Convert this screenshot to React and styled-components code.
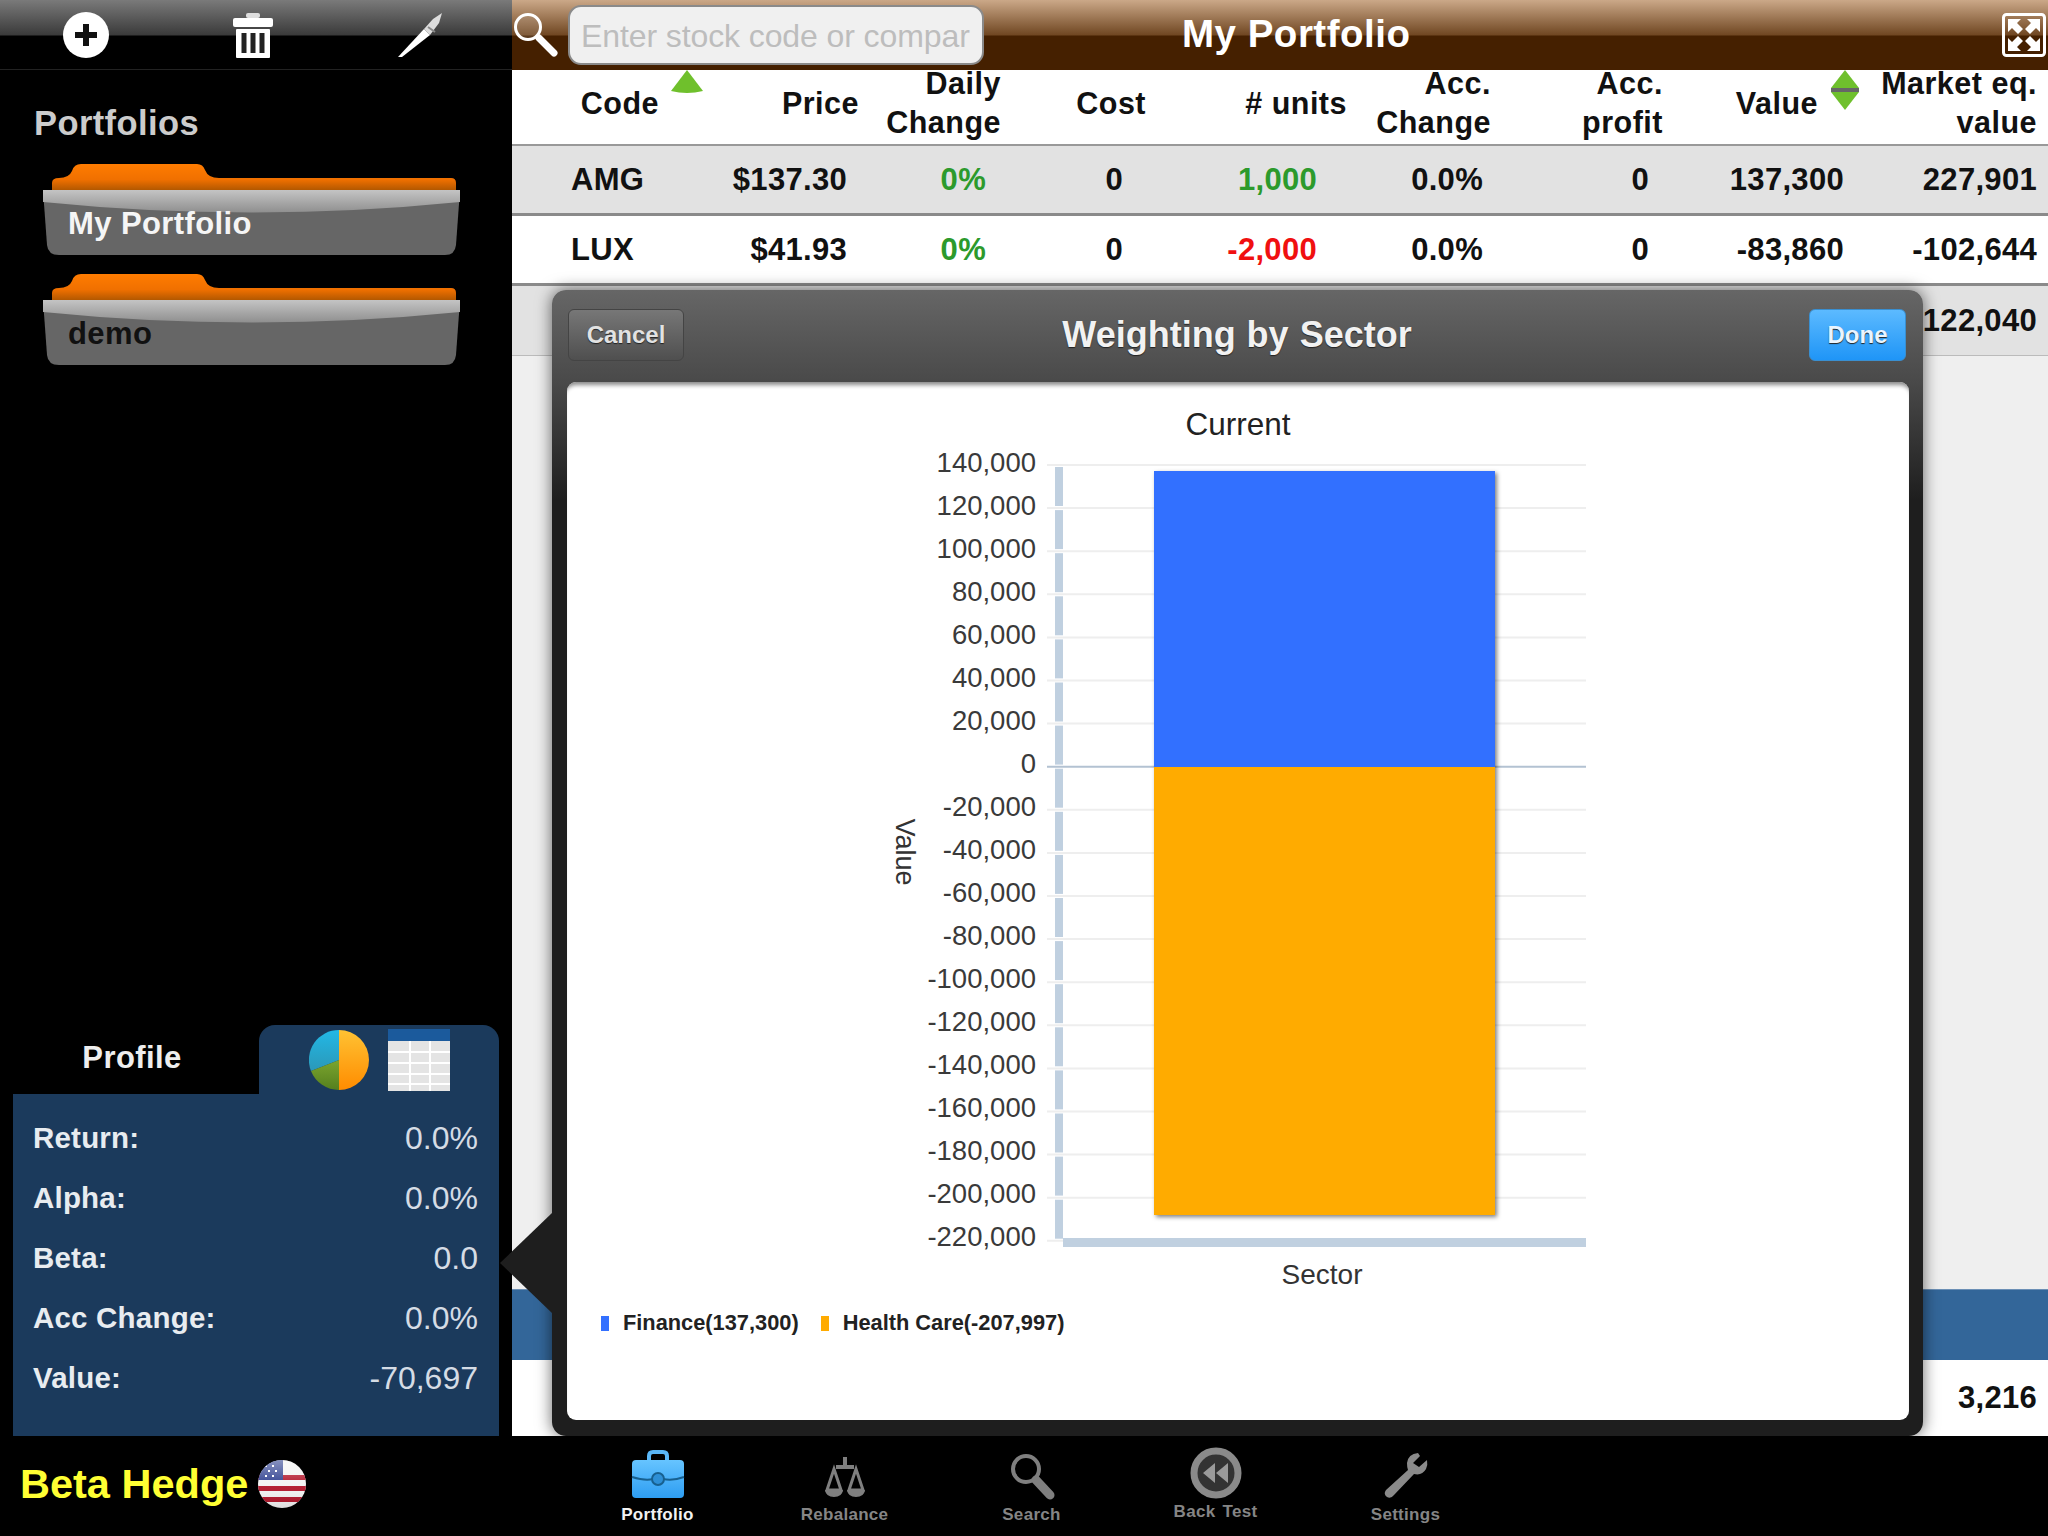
import React from 'react';
import styled, { createGlobalStyle } from 'styled-components';

const GlobalStyle = createGlobalStyle`
  html, body { margin: 0; padding: 0; background: #000; }
  body { font-family: "Liberation Sans", Arial, sans-serif; }
  #root { width: 2048px; height: 1536px; overflow: hidden; }
  * { box-sizing: border-box; }
`;

const Page = styled.div`
  width: 2048px;
  height: 1536px;
  display: flex;
  flex-direction: column;
  background: #000;
`;

const Top = styled.div`
  display: flex;
  height: 1436px;
`;

/* ---------- sidebar ---------- */

const Sidebar = styled.aside`
  width: 512px;
  display: flex;
  flex-direction: column;
  background: #000;
`;

const SideToolbar = styled.div`
  height: 70px;
  display: flex;
  align-items: center;
  padding-left: 63px;
  gap: 124px;
  border-bottom: 1px solid #222;
  background: linear-gradient(#7a7a7a 0, #3a3a3a 35px, #000 36px);
`;

const SideTitle = styled.div`
  margin: 33px 0 20px 34px;
  font-size: 34.5px;
  line-height: 40px;
  font-weight: bold;
  letter-spacing: 0.4px;
  color: #ccc;
`;

const Folder = styled.div`
  position: relative;
  width: 417px;
  height: 92px;
  margin: 0 0 18px 43px;
  padding: 42px 0 0 25px;
  font-size: 31px;
  line-height: 38px;
  font-weight: bold;
  letter-spacing: 0.4px;
  color: ${p => (p.$active ? '#f5f5f5' : '#111')};
  svg { position: absolute; left: 0; top: 0; }
  span { position: relative; }
`;

const ProfilePanel = styled.div`
  margin: auto 0 0 13px;
  width: 486px;
`;

const ProfileHead = styled.div`
  display: flex;
  height: 69px;
`;

const ProfileLabel = styled.div`
  width: 246px;
  padding-right: 8px;
  text-align: center;
  font-size: 31px;
  line-height: 66px;
  font-weight: bold;
  letter-spacing: 0.4px;
  color: #eee;
`;

const ProfileTab = styled.div`
  flex: 1;
  display: flex;
  gap: 19px;
  padding: 4px 0 0 50px;
  background: #1b3a5c;
  border-radius: 16px 16px 0 0;
`;

const ProfileBody = styled.div`
  height: 342px;
  padding: 14px 21px 0 20px;
  background: #1b3a5c;
`;

const StatRow = styled.div`
  display: flex;
  justify-content: space-between;
  height: 60px;
  line-height: 60px;
`;

const StatName = styled.span`
  font-size: 29.5px;
  font-weight: bold;
  letter-spacing: 0.2px;
  color: #e8ecf0;
`;

const StatValue = styled.span`
  font-size: 32px;
  color: #d5dce5;
`;

/* ---------- main ---------- */

const Main = styled.main`
  position: relative;
  flex: 1;
  display: flex;
  flex-direction: column;
  background: #efefef;
`;

const MainHeader = styled.div`
  height: 70px;
  display: flex;
  align-items: center;
  padding: 0 2px 0 1px;
  background: linear-gradient(#cba888 0, #704722 35px, #452000 36px);
`;

const SearchBox = styled.div`
  width: 416px;
  height: 60px;
  margin-left: 9px;
  padding-left: 11px;
  overflow: hidden;
  white-space: nowrap;
  font-size: 32px;
  line-height: 58px;
  letter-spacing: -0.1px;
  color: #bdbdbd;
  background: #f0f0f0;
  border: 2px solid #8a8a8a;
  border-radius: 13px;
`;

const HeaderTitle = styled.div`
  margin: 0 0 3px 198px;
  font-size: 38.5px;
  font-weight: bold;
  letter-spacing: 0.5px;
  color: #fff;
`;

const ExpandButton = styled.div`
  margin-left: auto;
  height: 44px;
`;

const HeadRow = styled.div`
  height: 76px;
  padding-bottom: 8px;
  display: grid;
  grid-template-columns: 147px 200px 142px 145px 201px 144px 172px 155px 219px;
  grid-template-rows: 66px;
  align-items: center;
  background: #fff;
  border-bottom: 2px solid #999;
`;

const HeadCell = styled.div`
  position: relative;
  text-align: right;
  font-size: 30.5px;
  line-height: 39px;
  font-weight: bold;
  letter-spacing: 0.5px;
  color: #111;
`;

const SortMark = styled.svg`
  position: absolute;
  top: ${p => p.$top}px;
  left: ${p => p.$left}px;
`;

const Row = styled.div`
  height: ${p => p.$height || 70}px;
  display: grid;
  grid-template-columns: 189px 146px 139px 137px 194px 166px 166px 195px 193px;
  align-items: center;
  background: ${p => (p.$shade ? '#e2e2e2' : '#fff')};
  border-bottom: 3px solid #8a8a8a;
  ${p => p.$flat && 'border-bottom: 1px solid #bbb;'}
`;

const Cell = styled.div`
  text-align: right;
  font-size: 31px;
  font-weight: bold;
  letter-spacing: 0.3px;
  color: ${p => p.$color || '#111'};
`;

const CodeCell = styled(Cell)`
  text-align: left;
  padding-left: 59px;
`;

const Filler = styled.div`
  flex: 1;
`;

const BlueBand = styled.div`
  height: 71px;
  background: #336699;
  border-top: 1px solid #6b8fb5;
`;

const TotalRow = styled(Row)`
  background: #fff;
  border-bottom: 0;
`;

/* ---------- modal ---------- */

const Modal = styled.div`
  position: absolute;
  left: 40px;
  top: 290px;
  width: 1371px;
  bottom: 0;
  display: flex;
  flex-direction: column;
  padding: 0 14px 16px 15px;
  border-radius: 14px;
  background: linear-gradient(#666 0, #4a4a4a 90px, #1e1e1e 210px);
  box-shadow: 0 0 16px rgba(0, 0, 0, 0.6);
`;

const Pointer = styled.div`
  position: absolute;
  left: -52px;
  top: 923px;
  width: 0;
  height: 0;
  border-style: solid;
  border-width: 50px 52px 50px 0;
  border-color: transparent #1e1e1e transparent transparent;
`;

const ModalBar = styled.div`
  height: 90px;
  margin: 0 3px 0 1px;
  display: grid;
  grid-template-columns: 1fr auto 1fr;
  align-items: center;
`;

const ModalTitle = styled.div`
  font-size: 36px;
  font-weight: bold;
  word-spacing: 1px;
  color: #f2f2f2;
  text-shadow: 0 1px 1px #222;
`;

const BarButton = styled.div`
  height: 52px;
  width: ${p => p.$width}px;
  justify-self: ${p => (p.$primary ? 'end' : 'start')};
  border-radius: 6px;
  text-align: center;
  font-size: 24px;
  line-height: 50px;
  font-weight: bold;
  color: ${p => (p.$primary ? '#eaf5ff' : '#e2e2e2')};
  text-shadow: 0 1px 1px #222;
  background: ${p =>
    p.$primary
      ? 'linear-gradient(#5cbaff, #1f95f7)'
      : 'linear-gradient(#777, #4f4f4f)'};
  border: 1px solid ${p => (p.$primary ? '#3a8fd0' : '#444')};
`;

const ModalBody = styled.div`
  flex: 1;
  margin-top: 2px;
  padding-top: 24px;
  background: #fff;
  border-radius: 9px;
  box-shadow: inset 0 6px 4px -3px #8a8a8a;
`;

const ChartTitle = styled.div`
  height: 37px;
  text-align: center;
  font-size: 31.5px;
  line-height: 36px;
  color: #222;
`;

const ChartSvg = styled.svg`
  display: block;
  font-family: "Liberation Sans", Arial, sans-serif;
`;

const Legend = styled.div`
  display: flex;
  align-items: center;
  margin: 15px 0 0 34px;
  height: 30px;
  font-size: 21.8px;
  font-weight: bold;
  color: #222;
`;

const Swatch = styled.i`
  display: block;
  width: 8px;
  height: 15px;
  margin-right: 14px;
  background: ${p => p.$color};
`;

const LegendItem = styled.span`
  margin-right: 22px;
`;

/* ---------- bottom bar ---------- */

const BottomBar = styled.div`
  height: 100px;
  display: flex;
  background: #000;
`;

const Brand = styled.div`
  width: 512px;
  display: flex;
  align-items: center;
  gap: 9px;
  padding: 0 0 4px 20px;
  font-size: 41.5px;
  font-weight: bold;
  color: #ffff33;
`;

const Nav = styled.nav`
  display: flex;
  padding: 14px 0 0 52px;
`;

const NavItem = styled.div`
  width: 187px;
  display: flex;
  flex-direction: column;
  align-items: center;
  ${p => p.$raised && 'margin-top: -3px; transform: translateX(-3px);'}
`;

const NavIcon = styled.div`
  height: 50px;
`;

const NavLabel = styled.div`
  margin-top: 5px;
  font-size: 17px;
  line-height: 20px;
  font-weight: bold;
  letter-spacing: 0.3px;
  word-spacing: 2px;
  color: ${p => (p.$active ? '#f2f2f2' : '#858585')};
`;

/* ---------- drawings ---------- */

const PlusIcon = () => (
  <svg width="46" height="46" viewBox="0 0 46 46">
    <circle cx="23" cy="23" r="23" fill="#fff" />
    <path d="M23 12v22M12 23h22" stroke="#111" strokeWidth="6" />
  </svg>
);

const TrashIcon = () => (
  <svg width="40" height="46" viewBox="0 0 40 46">
    <rect x="13" y="1" width="14" height="5" rx="2" fill="#ddd" />
    <rect x="0" y="6" width="40" height="9" rx="2" fill="#fff" />
    <rect x="3" y="17" width="34" height="29" rx="1" fill="#fff" />
    <path d="M11 21v20M20 21v20M29 21v20" stroke="#222" strokeWidth="5" />
  </svg>
);

const PenIcon = () => (
  <svg width="46" height="46" viewBox="0 0 46 46">
    <path d="M1 45 L27 17 L33 23 L5 45 Z" fill="#fff" />
    <path d="M27 17 L36 7 L45 1 L42 11 L33 23 Z" fill="#ddd" />
    <path d="M31 15 L38 20" stroke="#888" strokeWidth="2" />
  </svg>
);

const HeaderSearchIcon = () => (
  <svg width="46" height="46" viewBox="0 0 46 46">
    <circle cx="15" cy="15" r="12.5" fill="rgba(255,255,255,0.12)" stroke="#fff" strokeWidth="3" />
    <path d="M26 26 L41 41" stroke="#fff" strokeWidth="7" strokeLinecap="round" />
  </svg>
);

const ExpandArrow = ({ transform }) => (
  <path transform={transform} d="M6 6h13l-4 4 6 6-5 5-6-6-4 4z" fill="#fff" />
);

const ExpandIcon = () => (
  <svg width="44" height="44" viewBox="0 0 44 44">
    <rect x="1.5" y="1.5" width="41" height="41" rx="3" fill="none" stroke="#fff" strokeWidth="3" />
    <ExpandArrow />
    <ExpandArrow transform="translate(44 0) scale(-1 1)" />
    <ExpandArrow transform="translate(0 44) scale(1 -1)" />
    <ExpandArrow transform="translate(44 44) scale(-1 -1)" />
  </svg>
);

const FolderShape = ({ id }) => (
  <svg width="417" height="92" viewBox="0 0 417 92">
    <defs>
      <linearGradient id={`tab${id}`} x1="0" y1="0" x2="0" y2="1">
        <stop offset="0" stopColor="#ff7c00" />
        <stop offset="0.6" stopColor="#f07000" />
        <stop offset="1" stopColor="#b35800" />
      </linearGradient>
      <linearGradient id={`lip${id}`} x1="0" y1="0" x2="0" y2="1">
        <stop offset="0" stopColor="#c4c4c4" />
        <stop offset="1" stopColor="#8f8f8f" />
      </linearGradient>
    </defs>
    <path
      d="M9 27 V20 Q9 15 16 15 Q26 15 29 8 Q31 1 38 1 L154 1 Q160 1 162 7 Q165 15 176 15 L408 15 Q413 15 413 20 V27 Z"
      fill={`url(#tab${id})`}
    />
    <path d="M0 27 H417 L413 82 Q412 92 402 92 H16 Q5 92 4 82 Z" fill="#666" />
    <path d="M0 27 H417 V39 Q208 60 0 39 Z" fill={`url(#lip${id})`} />
  </svg>
);

const PieIcon = () => (
  <svg width="60" height="62" viewBox="0 0 60 62">
    <defs>
      <linearGradient id="pieOrange" x1="0" y1="0" x2="0" y2="1">
        <stop offset="0" stopColor="#ffc233" />
        <stop offset="1" stopColor="#ff8c00" />
      </linearGradient>
      <linearGradient id="pieBlue" x1="0" y1="0" x2="0" y2="1">
        <stop offset="0" stopColor="#22b8e6" />
        <stop offset="1" stopColor="#2b98b8" />
      </linearGradient>
      <linearGradient id="pieGreen" x1="0" y1="0" x2="0" y2="1">
        <stop offset="0" stopColor="#7ba52e" />
        <stop offset="1" stopColor="#557f1e" />
      </linearGradient>
    </defs>
    <path d="M30 31 V1 A30 30 0 0 1 30 61 Z" fill="url(#pieOrange)" />
    <path d="M30 31 V1 A30 30 0 0 0 2 42 Z" fill="url(#pieBlue)" />
    <path d="M30 31 L2 42 A30 30 0 0 0 30 61 Z" fill="url(#pieGreen)" />
  </svg>
);

const TableIcon = () => (
  <svg width="62" height="62" viewBox="0 0 62 62">
    <rect x="0" y="0" width="62" height="12" fill="#1b5a9c" />
    <rect x="0" y="12" width="62" height="50" fill="#e4e4e4" />
    <path d="M0 23h62M0 34h62M0 45h62M0 55h62M22 12v50M42 12v50" stroke="#fff" strokeWidth="2" />
  </svg>
);

const FlagIcon = () => (
  <svg width="50" height="50" viewBox="0 0 50 50">
    <defs>
      <clipPath id="flagClip"><circle cx="25" cy="25" r="24" /></clipPath>
      <linearGradient id="flagGloss" x1="0" y1="0" x2="0" y2="1">
        <stop offset="0" stopColor="#fff" stopOpacity="0.45" />
        <stop offset="0.5" stopColor="#fff" stopOpacity="0.05" />
        <stop offset="1" stopColor="#000" stopOpacity="0.1" />
      </linearGradient>
    </defs>
    <g clipPath="url(#flagClip)">
      <rect width="50" height="50" fill="#f4f4f4" />
      <path d="M0 16h50v5H0zM0 27h50v5H0zM0 38h50v5H0z" fill="#b3162b" />
      <rect width="26" height="21" fill="#2d3f8f" />
      <path d="M8 7h2M15 7h2M11 12h2M18 12h2M8 17h2M15 17h2" stroke="#fff" strokeWidth="2" />
      <rect width="50" height="50" fill="url(#flagGloss)" />
    </g>
  </svg>
);

const BriefcaseIcon = () => (
  <svg width="54" height="50" viewBox="0 0 54 50">
    <defs>
      <linearGradient id="caseBlue" x1="0" y1="0" x2="0" y2="1">
        <stop offset="0" stopColor="#66c4ff" />
        <stop offset="1" stopColor="#2d9df2" />
      </linearGradient>
    </defs>
    <path d="M18 11 V6 Q18 2 22 2 H32 Q36 2 36 6 V11" fill="none" stroke="#5bb8f8" strokeWidth="4" />
    <rect x="1" y="10" width="52" height="38" rx="4" fill="url(#caseBlue)" />
    <path d="M1 27 Q14 31 22 29 M32 29 Q42 31 53 27" stroke="#17608f" strokeWidth="2" fill="none" />
    <circle cx="27" cy="29" r="6" fill="#2d8fd6" stroke="#17608f" strokeWidth="2" />
  </svg>
);

const ScaleIcon = () => (
  <svg width="46" height="50" viewBox="0 0 46 50">
    <g fill="none" stroke="#7f7f7f" strokeWidth="3">
      <path d="M12 19 L5 40 H19 Z" />
      <path d="M34 19 L27 40 H41 Z" />
    </g>
    <path d="M21 7h4v8h7v4H14v-4h7z" fill="#7f7f7f" />
    <path d="M3 40h18q-1 7-9 7t-9-7zM25 40h18q-1 7-9 7t-9-7z" fill="#7f7f7f" />
  </svg>
);

const NavSearchIcon = () => (
  <svg width="46" height="50" viewBox="0 0 46 50">
    <circle cx="17" cy="19" r="13" fill="none" stroke="#7f7f7f" strokeWidth="4" />
    <path d="M27 30 L41 45" stroke="#7f7f7f" strokeWidth="9" strokeLinecap="round" />
  </svg>
);

const BackTestIcon = () => (
  <svg width="52" height="52" viewBox="0 0 52 52">
    <circle cx="26" cy="26" r="22" fill="#333" stroke="#8a8a8a" strokeWidth="7" />
    <path d="M25 16 V36 L13 26 Z M38 16 V36 L26 26 Z" fill="#9a9a9a" />
  </svg>
);

const WrenchIcon = () => (
  <svg width="46" height="50" viewBox="0 0 46 50">
    <path
      d="M35 3 Q25 4 24 13 Q24 18 25 20 L3 40 Q0 44 4 47 Q8 49 11 45 L31 24 Q39 26 43 19 Q45 15 44 10 L36 17 L30 13 L37 6 Z"
      fill="#8a8a8a"
    />
  </svg>
);

const UpMark = () => (
  <SortMark $left={158} $top={-14} width="34" height="26" viewBox="0 0 34 26">
    <path d="M17 0 L33 21 Q17 25 1 21 Z" fill="#6fc02c" />
  </SortMark>
);

const BothMark = () => (
  <SortMark $left={167} $top={-14} width="30" height="42" viewBox="0 0 30 42">
    <path d="M15 0 L29 18 H1 Z" fill="#6fc02c" />
    <path d="M15 40 L29 22 H1 Z" fill="#6fc02c" />
    <rect x="1" y="18" width="28" height="4" fill="#666" />
  </SortMark>
);

const ticks = [140, 120, 100, 80, 60, 40, 20, 0, -20, -40, -60, -80, -100, -120, -140, -160, -180, -200, -220];
const tickY = i => 22 + i * 43.1;
const labelY = i => 29 + i * 43;
const tickLabel = t => (t === 0 ? '0' : `${t < 0 ? '-' : ''}${Math.abs(t)},000`);

const Chart = () => (
  <ChartSvg width="1342" height="850" viewBox="0 0 1342 850">
    <defs>
      <filter id="barShadow" x="-5%" y="-5%" width="110%" height="110%">
        <feDropShadow dx="2" dy="2" stdDeviation="2" floodColor="#000" floodOpacity="0.5" />
      </filter>
    </defs>
    {ticks.map((t, i) => (
      <g key={t}>
        <line
          x1="480"
          x2="1019"
          y1={tickY(i)}
          y2={tickY(i)}
          stroke={t === 0 ? '#b3c2d2' : '#eee'}
          strokeWidth="2"
        />
        {i < ticks.length - 1 && (
          <rect x="488" y={tickY(i) + 2} width="8" height="39" fill="#c0d0e0" />
        )}
        <text x="469" y={labelY(i)} textAnchor="end" fontSize="27.5" fill="#3a3a3a">
          {tickLabel(t)}
        </text>
      </g>
    ))}
    <rect x="496" y="795" width="523" height="9" fill="#c0d0e0" />
    <g filter="url(#barShadow)">
      <rect x="587" y="28" width="341" height="296" fill="#3370ff" />
      <rect x="587" y="324" width="341" height="448" fill="#ffab00" />
    </g>
    <text x="755" y="841" textAnchor="middle" fontSize="28" fill="#333">Sector</text>
    <text transform="translate(329 409) rotate(90)" textAnchor="middle" fontSize="27" fill="#333">Value</text>
  </ChartSvg>
);

const stats = [
  ['Return:', '0.0%'],
  ['Alpha:', '0.0%'],
  ['Beta:', '0.0'],
  ['Acc Change:', '0.0%'],
  ['Value:', '-70,697'],
];

const holdings = [
  { code: 'AMG', price: '$137.30', units: '1,000', unitColor: '#2c9a2c', value: '137,300', market: '227,901', shade: true },
  { code: 'LUX', price: '$41.93', units: '-2,000', unitColor: '#f01010', value: '-83,860', market: '-102,644' },
];

const navItems = [
  { label: 'Portfolio', icon: <BriefcaseIcon />, active: true },
  { label: 'Rebalance', icon: <ScaleIcon /> },
  { label: 'Search', icon: <NavSearchIcon /> },
  { label: 'Back Test', icon: <BackTestIcon />, raised: true },
  { label: 'Settings', icon: <WrenchIcon /> },
];

export default function App() {
  return (
    <Page>
      <GlobalStyle />
      <Top>
        <Sidebar>
          <SideToolbar>
            <PlusIcon />
            <TrashIcon />
            <PenIcon />
          </SideToolbar>
          <SideTitle>Portfolios</SideTitle>
          <Folder $active>
            <FolderShape id="a" />
            <span>My Portfolio</span>
          </Folder>
          <Folder>
            <FolderShape id="b" />
            <span>demo</span>
          </Folder>
          <ProfilePanel>
            <ProfileHead>
              <ProfileLabel>Profile</ProfileLabel>
              <ProfileTab>
                <PieIcon />
                <TableIcon />
              </ProfileTab>
            </ProfileHead>
            <ProfileBody>
              {stats.map(([name, value]) => (
                <StatRow key={name}>
                  <StatName>{name}</StatName>
                  <StatValue>{value}</StatValue>
                </StatRow>
              ))}
            </ProfileBody>
          </ProfilePanel>
        </Sidebar>

        <Main>
          <MainHeader>
            <HeaderSearchIcon />
            <SearchBox>Enter stock code or compar</SearchBox>
            <HeaderTitle>My Portfolio</HeaderTitle>
            <ExpandButton><ExpandIcon /></ExpandButton>
          </MainHeader>

          <HeadRow>
            <HeadCell>Code<UpMark /></HeadCell>
            <HeadCell>Price</HeadCell>
            <HeadCell>Daily<br />Change</HeadCell>
            <HeadCell>Cost</HeadCell>
            <HeadCell># units</HeadCell>
            <HeadCell>Acc.<br />Change</HeadCell>
            <HeadCell>Acc.<br />profit</HeadCell>
            <HeadCell>Value<BothMark /></HeadCell>
            <HeadCell>Market eq.<br />value</HeadCell>
          </HeadRow>

          {holdings.map(h => (
            <Row key={h.code} $shade={h.shade}>
              <CodeCell>{h.code}</CodeCell>
              <Cell>{h.price}</Cell>
              <Cell $color="#2c9a2c">0%</Cell>
              <Cell>0</Cell>
              <Cell $color={h.unitColor}>{h.units}</Cell>
              <Cell>0.0%</Cell>
              <Cell>0</Cell>
              <Cell>{h.value}</Cell>
              <Cell>{h.market}</Cell>
            </Row>
          ))}
          <Row $shade $flat>
            <CodeCell />
            <Cell /><Cell /><Cell /><Cell /><Cell /><Cell /><Cell />
            <Cell>122,040</Cell>
          </Row>

          <Filler />
          <BlueBand />
          <TotalRow $height={76}>
            <CodeCell />
            <Cell /><Cell /><Cell /><Cell /><Cell /><Cell /><Cell />
            <Cell>3,216</Cell>
          </TotalRow>

          <Modal>
            <Pointer />
            <ModalBar>
              <BarButton $width={116}>Cancel</BarButton>
              <ModalTitle>Weighting by Sector</ModalTitle>
              <BarButton $primary $width={97}>Done</BarButton>
            </ModalBar>
            <ModalBody>
              <ChartTitle>Current</ChartTitle>
              <Chart />
              <Legend>
                <Swatch $color="#3370ff" />
                <LegendItem>Finance(137,300)</LegendItem>
                <Swatch $color="#ffab00" />
                <LegendItem>Health Care(-207,997)</LegendItem>
              </Legend>
            </ModalBody>
          </Modal>
        </Main>
      </Top>

      <BottomBar>
        <Brand>
          Beta Hedge
          <FlagIcon />
        </Brand>
        <Nav>
          {navItems.map(item => (
            <NavItem key={item.label} $raised={item.raised}>
              <NavIcon>{item.icon}</NavIcon>
              <NavLabel $active={item.active}>{item.label}</NavLabel>
            </NavItem>
          ))}
        </Nav>
      </BottomBar>
    </Page>
  );
}
